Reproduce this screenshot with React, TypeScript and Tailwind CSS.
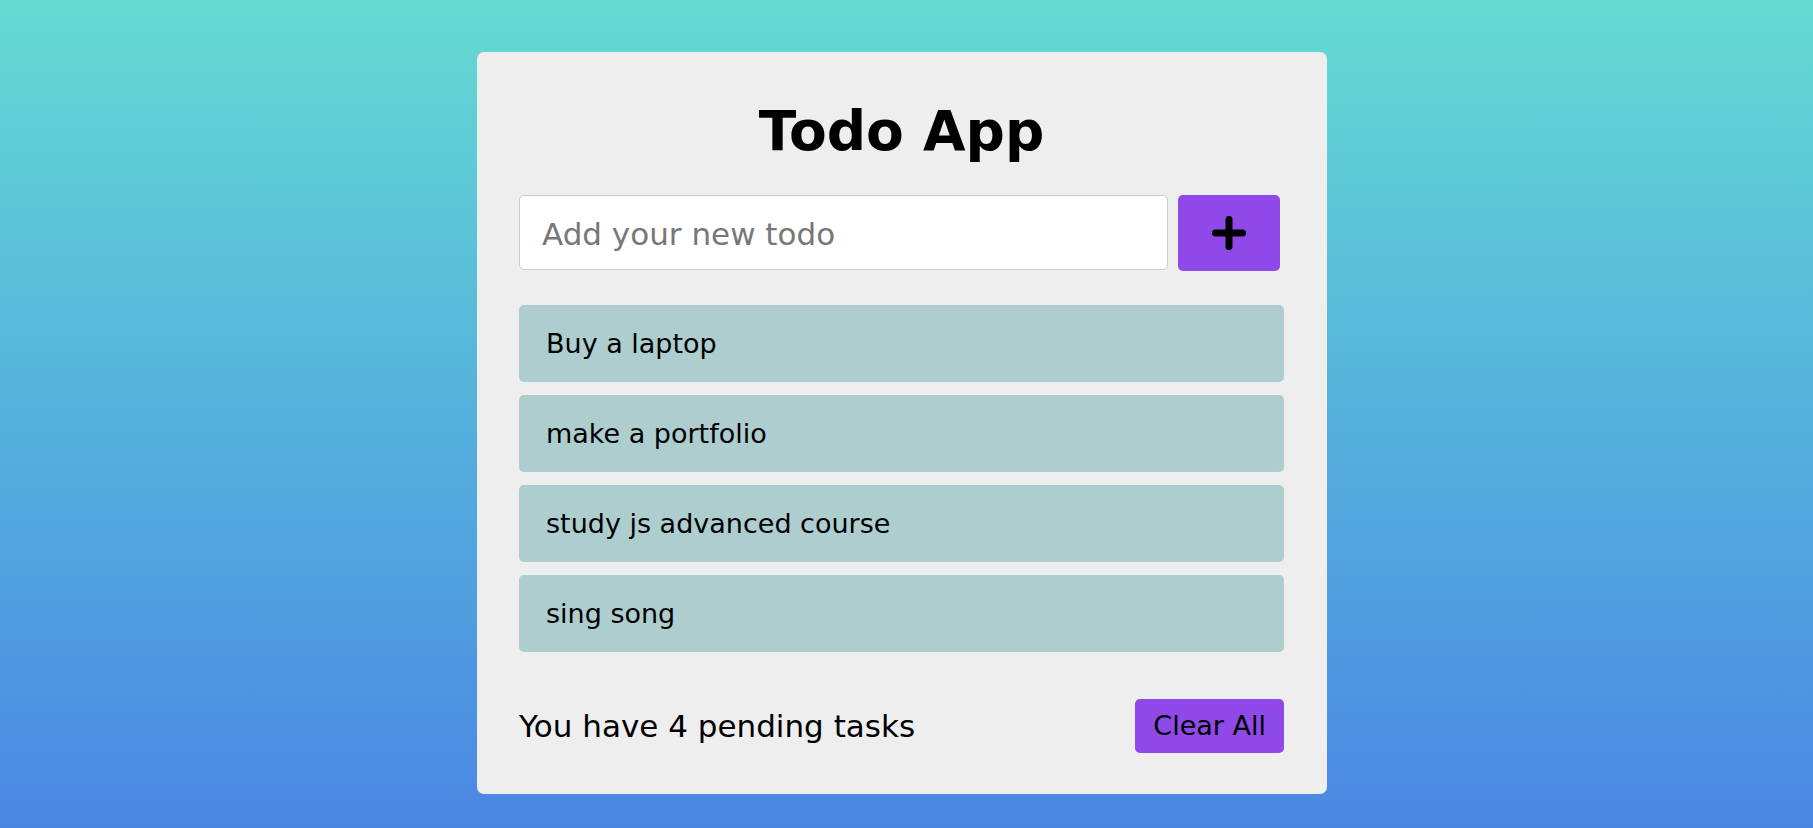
import React from "react";

const todos = ["Buy a laptop", "make a portfolio", "study js advanced course", "sing song"];

export default function App() {
  return (
    <div
      className="min-h-screen w-full bg-gradient-to-b from-[#65dad1] to-[#4b86e3] flex justify-center items-start pt-[52px] pr-[9px]"
      style={{ fontFamily: "'DejaVu Sans', Verdana, sans-serif" }}
    >
      <div className="w-[850px] bg-[#eeeeee] rounded-[7px] pt-[48px] pl-[42px] pr-[43px] pb-[41px] flex flex-col">
        <h1 className="text-center text-[55px] leading-[63px] font-bold text-black">Todo App</h1>
        <div className="mt-[32px] flex gap-[10px] mr-[4px]">
          <input
            type="text"
            placeholder="Add your new todo"
            className="flex-1 h-[75px] bg-white border border-[#cccccc] rounded-[5px] pl-[22px] pt-[2px] text-[31px] text-black placeholder:text-[#777777] outline-none"
          />
          <button className="w-[102px] h-[76px] bg-[#8e49e8] rounded-[5px] flex items-center justify-center">
            <svg width="34" height="34" viewBox="0 0 34 34">
              <line x1="3.5" y1="17" x2="30.5" y2="17" stroke="black" strokeWidth="7" strokeLinecap="round" />
              <line x1="17" y1="3.5" x2="17" y2="30.5" stroke="black" strokeWidth="7" strokeLinecap="round" />
            </svg>
          </button>
        </div>
        <ul className="mt-[34px] flex flex-col gap-[13px]">
          {todos.map((t) => (
            <li
              key={t}
              className="h-[77px] bg-[#adcdcf] rounded-[5px] flex items-center pl-[27px] pt-[2px] text-[27px] text-black"
            >
              {t}
            </li>
          ))}
        </ul>
        <div className="mt-[47px] flex items-center justify-between">
          <span className="text-[31px] text-black">You have 4 pending tasks</span>
          <button className="h-[54px] px-[18px] bg-[#8e49e8] rounded-[5px] text-[27px] text-black">
            Clear All
          </button>
        </div>
      </div>
    </div>
  );
}
